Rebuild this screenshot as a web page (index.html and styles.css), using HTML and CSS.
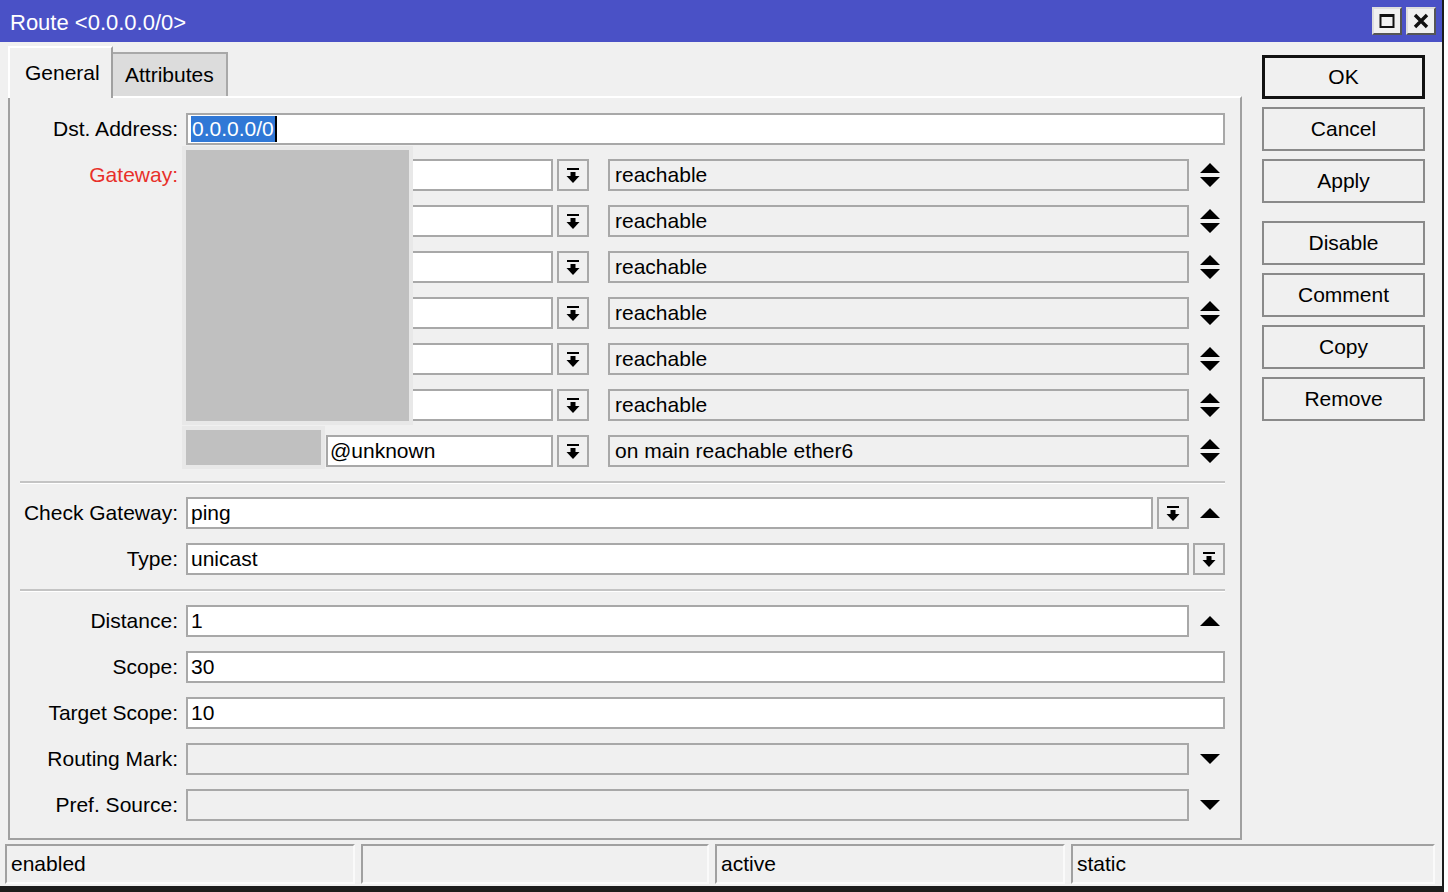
FILE: index.html
```html
<!DOCTYPE html>
<html lang="en">
<head>
  <meta charset="UTF-8" />
  <title>Route &lt;0.0.0.0/0&gt;</title>
  <link rel="stylesheet" href="styles.css">
</head>
<body>
  <div class="window">
    <div class="titlebar">
      <span class="title">Route &lt;0.0.0.0/0&gt;</span>
      <div class="tb-buttons">
        <div class="tb-btn">
          <svg width="16" height="16" viewBox="0 0 16 16"><rect x="1.5" y="2" width="13" height="12" fill="none" stroke="#111" stroke-width="2"/><rect x="1" y="1" width="14" height="3" fill="#111"/></svg>
        </div>
        <div class="tb-btn">
          <svg width="16" height="16" viewBox="0 0 16 16"><path d="M2 2 L14 14 M14 2 L2 14" stroke="#111" stroke-width="3.4"/></svg>
        </div>
      </div>
    </div>

    <div class="content">
      <div class="main">
        <div class="tabs">
          <div class="tab active">General</div>
          <div class="tab">Attributes</div>
        </div>

        <div class="panel">
          <div class="row">
            <label>Dst. Address:</label>
            <div class="fields">
              <div class="field"><span class="sel">0.0.0.0/0</span><span class="caret"></span></div>
            </div>
          </div>

          <div class="gateways">
            <div class="redacted big"></div>
            <div class="redacted small"></div>

            <div class="row">
              <label class="req">Gateway:</label>
              <div class="fields">
                <div class="field gw"></div>
                <div class="dd"><svg width="14" height="17" viewBox="0 0 14 17"><rect x="1" y="1" width="12" height="2"/><rect x="4.5" y="5" width="5" height="4"/><path d="M0.5 9 H13.5 L7 16 Z"/></svg></div>
                <div class="field ro status">reachable</div>
                <div class="spin"><svg width="22" height="26" viewBox="0 0 22 26"><path d="M1 11 H21 L11 1 Z M1 15 H21 L11 25 Z"/></svg></div>
              </div>
            </div>
            <div class="row">
              <label></label>
              <div class="fields">
                <div class="field gw"></div>
                <div class="dd"><svg width="14" height="17" viewBox="0 0 14 17"><rect x="1" y="1" width="12" height="2"/><rect x="4.5" y="5" width="5" height="4"/><path d="M0.5 9 H13.5 L7 16 Z"/></svg></div>
                <div class="field ro status">reachable</div>
                <div class="spin"><svg width="22" height="26" viewBox="0 0 22 26"><path d="M1 11 H21 L11 1 Z M1 15 H21 L11 25 Z"/></svg></div>
              </div>
            </div>
            <div class="row">
              <label></label>
              <div class="fields">
                <div class="field gw"></div>
                <div class="dd"><svg width="14" height="17" viewBox="0 0 14 17"><rect x="1" y="1" width="12" height="2"/><rect x="4.5" y="5" width="5" height="4"/><path d="M0.5 9 H13.5 L7 16 Z"/></svg></div>
                <div class="field ro status">reachable</div>
                <div class="spin"><svg width="22" height="26" viewBox="0 0 22 26"><path d="M1 11 H21 L11 1 Z M1 15 H21 L11 25 Z"/></svg></div>
              </div>
            </div>
            <div class="row">
              <label></label>
              <div class="fields">
                <div class="field gw"></div>
                <div class="dd"><svg width="14" height="17" viewBox="0 0 14 17"><rect x="1" y="1" width="12" height="2"/><rect x="4.5" y="5" width="5" height="4"/><path d="M0.5 9 H13.5 L7 16 Z"/></svg></div>
                <div class="field ro status">reachable</div>
                <div class="spin"><svg width="22" height="26" viewBox="0 0 22 26"><path d="M1 11 H21 L11 1 Z M1 15 H21 L11 25 Z"/></svg></div>
              </div>
            </div>
            <div class="row">
              <label></label>
              <div class="fields">
                <div class="field gw"></div>
                <div class="dd"><svg width="14" height="17" viewBox="0 0 14 17"><rect x="1" y="1" width="12" height="2"/><rect x="4.5" y="5" width="5" height="4"/><path d="M0.5 9 H13.5 L7 16 Z"/></svg></div>
                <div class="field ro status">reachable</div>
                <div class="spin"><svg width="22" height="26" viewBox="0 0 22 26"><path d="M1 11 H21 L11 1 Z M1 15 H21 L11 25 Z"/></svg></div>
              </div>
            </div>
            <div class="row">
              <label></label>
              <div class="fields">
                <div class="field gw"></div>
                <div class="dd"><svg width="14" height="17" viewBox="0 0 14 17"><rect x="1" y="1" width="12" height="2"/><rect x="4.5" y="5" width="5" height="4"/><path d="M0.5 9 H13.5 L7 16 Z"/></svg></div>
                <div class="field ro status">reachable</div>
                <div class="spin"><svg width="22" height="26" viewBox="0 0 22 26"><path d="M1 11 H21 L11 1 Z M1 15 H21 L11 25 Z"/></svg></div>
              </div>
            </div>
            <div class="row">
              <label></label>
              <div class="fields">
                <div class="field gw short">@unknown</div>
                <div class="dd"><svg width="14" height="17" viewBox="0 0 14 17"><rect x="1" y="1" width="12" height="2"/><rect x="4.5" y="5" width="5" height="4"/><path d="M0.5 9 H13.5 L7 16 Z"/></svg></div>
                <div class="field ro status">on main reachable ether6</div>
                <div class="spin"><svg width="22" height="26" viewBox="0 0 22 26"><path d="M1 11 H21 L11 1 Z M1 15 H21 L11 25 Z"/></svg></div>
              </div>
            </div>
          </div>

          <div class="sep"></div>

          <div class="row">
            <label>Check Gateway:</label>
            <div class="fields">
              <div class="field">ping</div>
              <div class="dd"><svg width="14" height="17" viewBox="0 0 14 17"><rect x="1" y="1" width="12" height="2"/><rect x="4.5" y="5" width="5" height="4"/><path d="M0.5 9 H13.5 L7 16 Z"/></svg></div>
              <div class="spin"><svg width="22" height="12" viewBox="0 0 22 12"><path d="M1 11 H21 L11 1 Z"/></svg></div>
            </div>
          </div>
          <div class="row">
            <label>Type:</label>
            <div class="fields">
              <div class="field">unicast</div>
              <div class="dd"><svg width="14" height="17" viewBox="0 0 14 17"><rect x="1" y="1" width="12" height="2"/><rect x="4.5" y="5" width="5" height="4"/><path d="M0.5 9 H13.5 L7 16 Z"/></svg></div>
            </div>
          </div>

          <div class="sep"></div>

          <div class="row">
            <label>Distance:</label>
            <div class="fields">
              <div class="field">1</div>
              <div class="spin"><svg width="22" height="12" viewBox="0 0 22 12"><path d="M1 11 H21 L11 1 Z"/></svg></div>
            </div>
          </div>
          <div class="row">
            <label>Scope:</label>
            <div class="fields"><div class="field">30</div></div>
          </div>
          <div class="row">
            <label>Target Scope:</label>
            <div class="fields"><div class="field">10</div></div>
          </div>
          <div class="row">
            <label>Routing Mark:</label>
            <div class="fields">
              <div class="field ro"></div>
              <div class="spin"><svg width="22" height="12" viewBox="0 0 22 12"><path d="M1 1 H21 L11 11 Z"/></svg></div>
            </div>
          </div>
          <div class="row">
            <label>Pref. Source:</label>
            <div class="fields">
              <div class="field ro"></div>
              <div class="spin"><svg width="22" height="12" viewBox="0 0 22 12"><path d="M1 1 H21 L11 11 Z"/></svg></div>
            </div>
          </div>
        </div>
      </div>

      <div class="actions">
        <button class="default">OK</button>
        <button>Cancel</button>
        <button class="gap-after">Apply</button>
        <button>Disable</button>
        <button>Comment</button>
        <button>Copy</button>
        <button>Remove</button>
      </div>
    </div>

    <div class="statusbar">
      <div class="cell">enabled</div>
      <div class="cell"></div>
      <div class="cell">active</div>
      <div class="cell">static</div>
    </div>
  </div>
</body>
</html>
```

FILE: styles.css
```css
* { box-sizing: border-box; }
body { margin: 0; background: #fff; font-family: "Liberation Sans", Arial, sans-serif; font-size: 21px; color: #000; }

.window { width: 1444px; height: 892px; background: #f0f0f0; border-right: 2px solid #1c1c1c; border-bottom: 6px solid #1c1c1c; display: flex; flex-direction: column; }

.titlebar { height: 42px; background: #4a51c6; display: flex; align-items: center; justify-content: space-between; padding: 0 6px 0 10px; }
.title { color: #fff; font-size: 22px; padding-top: 4px; }
.tb-buttons { display: flex; gap: 4px; }
.tb-btn { width: 30px; height: 28px; background: #f0f0f0; border: 2px solid #555; border-top-color: #ddd; border-left-color: #ddd; display: flex; align-items: center; justify-content: center; }

.content { display: flex; height: 798px; }
.main { width: 1234px; margin-left: 8px; display: flex; flex-direction: column; }

.tabs { display: flex; align-items: flex-end; height: 54px; padding-top: 4px; }
.tab { height: 44px; padding: 0 12px; display: flex; align-items: center; background: #dcdcdc; border: 2px solid #a8a8a8; border-bottom: none; border-left: none; }
.tab.active { height: 52px; width: 105px; padding: 0 0 0 15px; background: #f0f0f0; border: 2px solid #fff; border-right-color: #a0a0a0; border-bottom: none; margin-bottom: -2px; position: relative; z-index: 1; }

.panel { flex: 1; border: 2px solid #a0a0a0; border-top-color: #fff; padding: 8px 15px 10px 0; }

.row { display: flex; align-items: center; height: 46px; }
.row label { width: 168px; margin-right: 8px; text-align: right; white-space: nowrap; }
.row label.req { color: #e8302a; }
.fields { flex: 1; display: flex; align-items: center; height: 32px; }

.field { flex: 1; height: 32px; background: #fff; border: 2px solid #a8a8a8; padding: 0 4px 0 3px; display: flex; align-items: center; white-space: nowrap; overflow: hidden; }
.field.ro { background: #f0f0f0; }
.field.gw { flex: 0 0 367px; }
.field.gw.short { flex-basis: 227px; margin-left: 140px; padding-left: 2px; }
.field.status { padding-left: 5px; }
.sel { background: #3078d6; color: #fff; padding: 0 1px; line-height: 26px; }
.caret { width: 2px; height: 26px; background: #000; }

.dd { flex: 0 0 32px; height: 32px; margin-left: 4px; border: 2px solid #a8a8a8; background: #f0f0f0; display: flex; align-items: center; justify-content: center; }
.gateways .dd { margin-right: 19px; }
.spin { flex: 0 0 36px; display: flex; justify-content: center; align-items: center; padding-left: 6px; }

.gateways { position: relative; }
.redacted { position: absolute; background: #c0c0c0; box-shadow: 0 0 0 4px #e8e8e8; z-index: 1; }
.redacted.big { left: 176px; top: -2px; width: 223px; height: 271px; }
.redacted.small { left: 176px; top: 278px; width: 135px; height: 35px; }

.sep { height: 16px; margin-left: 10px; display: flex; align-items: center; }
.sep::before { content: ""; flex: 1; height: 2px; background: #c4c4c4; border-bottom: 1px solid #fff; }

.actions { width: 163px; margin-left: 20px; padding-top: 13px; display: flex; flex-direction: column; gap: 8px; }
.actions button { height: 44px; font: inherit; background: #f0f0f0; border: 2px solid #8a8a8a; color: #000; padding: 0; }
.actions button.default { border: 3px solid #111; }
.actions button.gap-after { margin-bottom: 10px; }

.statusbar { display: grid; grid-template-columns: 350px 348px 350px 1fr; gap: 6px; padding: 4px 7px 0 5px; height: 46px; }
.cell { height: 40px; border: 2px solid #a0a0a0; border-right-color: #fafafa; border-bottom-color: #fafafa; padding-left: 4px; display: flex; align-items: center; }
```
